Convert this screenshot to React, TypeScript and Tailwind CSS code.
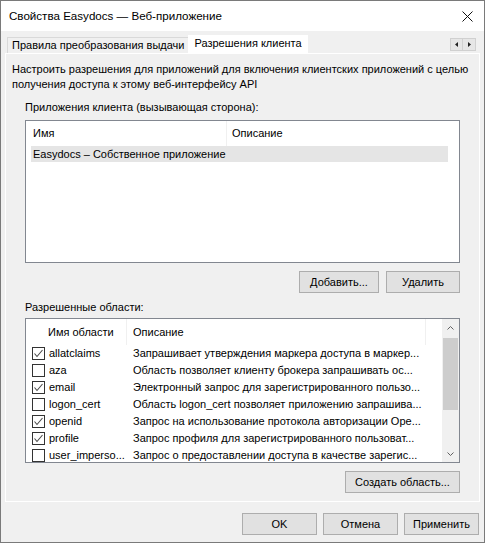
import { ReactNode } from "react";

const scopes = [
  { name: "allatclaims", checked: true, desc: "Запрашивает утверждения маркера доступа в маркер..." },
  { name: "aza", checked: false, desc: "Область позволяет клиенту брокера запрашивать ос..." },
  { name: "email", checked: true, desc: "Электронный запрос для зарегистрированного пользо..." },
  { name: "logon_cert", checked: false, desc: "Область logon_cert позволяет приложению запрашива..." },
  { name: "openid", checked: true, desc: "Запрос на использование протокола авторизации Ope..." },
  { name: "profile", checked: true, desc: "Запрос профиля для зарегистрированного пользоват..." },
  { name: "user_imperso...", checked: false, desc: "Запрос о предоставлении доступа в качестве зарегис..." },
];

function Button({ children, width }: { children: ReactNode; width: string }) {
  return (
    <button className={`${width} h-[22px] bg-[#e1e1e1] border border-[#adadad] flex items-center justify-center text-[11px] leading-none`}>
      {children}
    </button>
  );
}

function CheckBox({ checked }: { checked: boolean }) {
  return (
    <span className="w-[13px] h-[13px] shrink-0 border border-[#333333] bg-white flex items-center justify-center">
      {checked && (
        <svg width="11" height="11" viewBox="0 0 11 11">
          <polyline points="1.5,5.5 4,8.5 9.5,2" fill="none" stroke="#4a4a4a" strokeWidth="1.1" />
        </svg>
      )}
    </span>
  );
}

export default function App() {
  return (
    <div className="w-[485px] h-[543px] flex flex-col bg-[#f0f0f0] border border-[#7a7a7a] font-['Liberation_Sans',sans-serif] text-[11px] text-black">
      {/* Title bar */}
      <div className="h-[30px] shrink-0 bg-white flex items-center pl-[8px] pr-[11px]">
        <span className="text-[11.6px]">Свойства Easydocs — Веб-приложение</span>
        <svg className="ml-auto" width="11" height="11" viewBox="0 0 11 11">
          <path d="M0.5 0.5 L10.5 10.5 M10.5 0.5 L0.5 10.5" stroke="#111" strokeWidth="1" />
        </svg>
      </div>

      <div className="px-[4px] flex flex-col">
        {/* Tabs */}
        <div className="h-[22px] flex items-end pl-[2px]">
          <div className="h-[16px] border-t border-l border-[#d9d9d9] px-[4px] pb-[1px] flex items-center whitespace-nowrap">
            Правила преобразования выдачи
          </div>
          <div className="h-[19px] bg-white px-[6px] pb-[3px] flex items-center whitespace-nowrap -mb-px relative z-10">
            Разрешения клиента
          </div>
          <div className="ml-auto mr-[4px] mb-[2px] flex">
            <span className="w-[13px] h-[13px] bg-[#e6e6e6] border border-[#d0d0d0] flex items-center justify-center">
              <svg width="3" height="5" viewBox="0 0 3 5"><polygon points="3,0 3,5 0,2.5" fill="#222" /></svg>
            </span>
            <span className="w-[13px] h-[13px] bg-[#e6e6e6] border border-l-0 border-[#d0d0d0] flex items-center justify-center">
              <svg width="3" height="5" viewBox="0 0 3 5"><polygon points="0,0 0,5 3,2.5" fill="#222" /></svg>
            </span>
          </div>
        </div>

        {/* Tab page */}
        <div className="h-[449px] border border-white flex flex-col pt-[8px] pl-[6px] leading-[15px]">
          <p>Настроить разрешения для приложений для включения клиентских приложений с целью</p>
          <p>получения доступа к этому веб-интерфейсу API</p>

          <div className="ml-[13px] w-[435px] flex flex-col">
            <div className="mt-[8px]">Приложения клиента (вызывающая сторона):</div>

            {/* Client applications list */}
            <div className="mt-[5px] h-[143px] border border-[#828790] bg-white pl-[5px] pr-[11px]">
              <div className="h-[25px] flex items-center">
                <span className="w-[196px] pl-[2px] h-full flex items-center border-r border-[#f0f0f0]">Имя</span>
                <span className="pl-[5px]">Описание</span>
              </div>
              <div className="h-[16px] bg-[#e5e5e5] flex items-center pl-[2px]">Easydocs – Собственное приложение</div>
            </div>

            <div className="mt-[8px] flex justify-end gap-[7px]">
              <Button width="w-[80px]">Добавить...</Button>
              <Button width="w-[74px]">Удалить</Button>
            </div>

            <div className="mt-[7px]">Разрешенные области:</div>

            {/* Scopes list */}
            <div className="mt-[3px] h-[145px] border border-[#828790] bg-white flex">
              <div className="flex-1 flex flex-col overflow-hidden">
                <div className="h-[26px] shrink-0 flex items-center">
                  <span className="w-[101px] h-full pl-[22px] flex items-center border-r border-[#f0f0f0]">Имя области</span>
                  <span className="w-[299px] h-full pl-[6px] flex items-center border-r border-[#f0f0f0]">Описание</span>
                </div>
                {scopes.map((s) => (
                  <div key={s.name} className="h-[17px] shrink-0 flex items-center">
                    <span className="w-[101px] shrink-0 pl-[6px] flex items-center gap-[4px] whitespace-nowrap overflow-hidden">
                      <CheckBox checked={s.checked} />
                      {s.name}
                    </span>
                    <span className="pl-[6px] whitespace-nowrap">{s.desc}</span>
                  </div>
                ))}
              </div>
              {/* Vertical scrollbar */}
              <div className="w-[17px] shrink-0 bg-[#f0f0f0] flex flex-col items-center">
                <span className="h-[17px] flex items-center justify-center">
                  <svg width="7" height="4" viewBox="0 0 7 4"><polyline points="0.5,3.5 3.5,0.5 6.5,3.5" fill="none" stroke="#606060" /></svg>
                </span>
                <span className="mt-[2px] w-[15px] h-[72px] bg-[#cdcdcd]" />
                <span className="mt-auto h-[17px] flex items-center justify-center">
                  <svg width="7" height="4" viewBox="0 0 7 4"><polyline points="0.5,0.5 3.5,3.5 6.5,0.5" fill="none" stroke="#606060" /></svg>
                </span>
              </div>
            </div>

            <div className="mt-[8px] flex justify-end">
              <Button width="w-[115px]">Создать область...</Button>
            </div>
          </div>
        </div>
      </div>

      {/* Dialog buttons */}
      <div className="mt-[11px] pr-[5px] flex justify-end gap-[6px]">
        <Button width="w-[75px]">OK</Button>
        <Button width="w-[75px]">Отмена</Button>
        <Button width="w-[75px]">Применить</Button>
      </div>
    </div>
  );
}
